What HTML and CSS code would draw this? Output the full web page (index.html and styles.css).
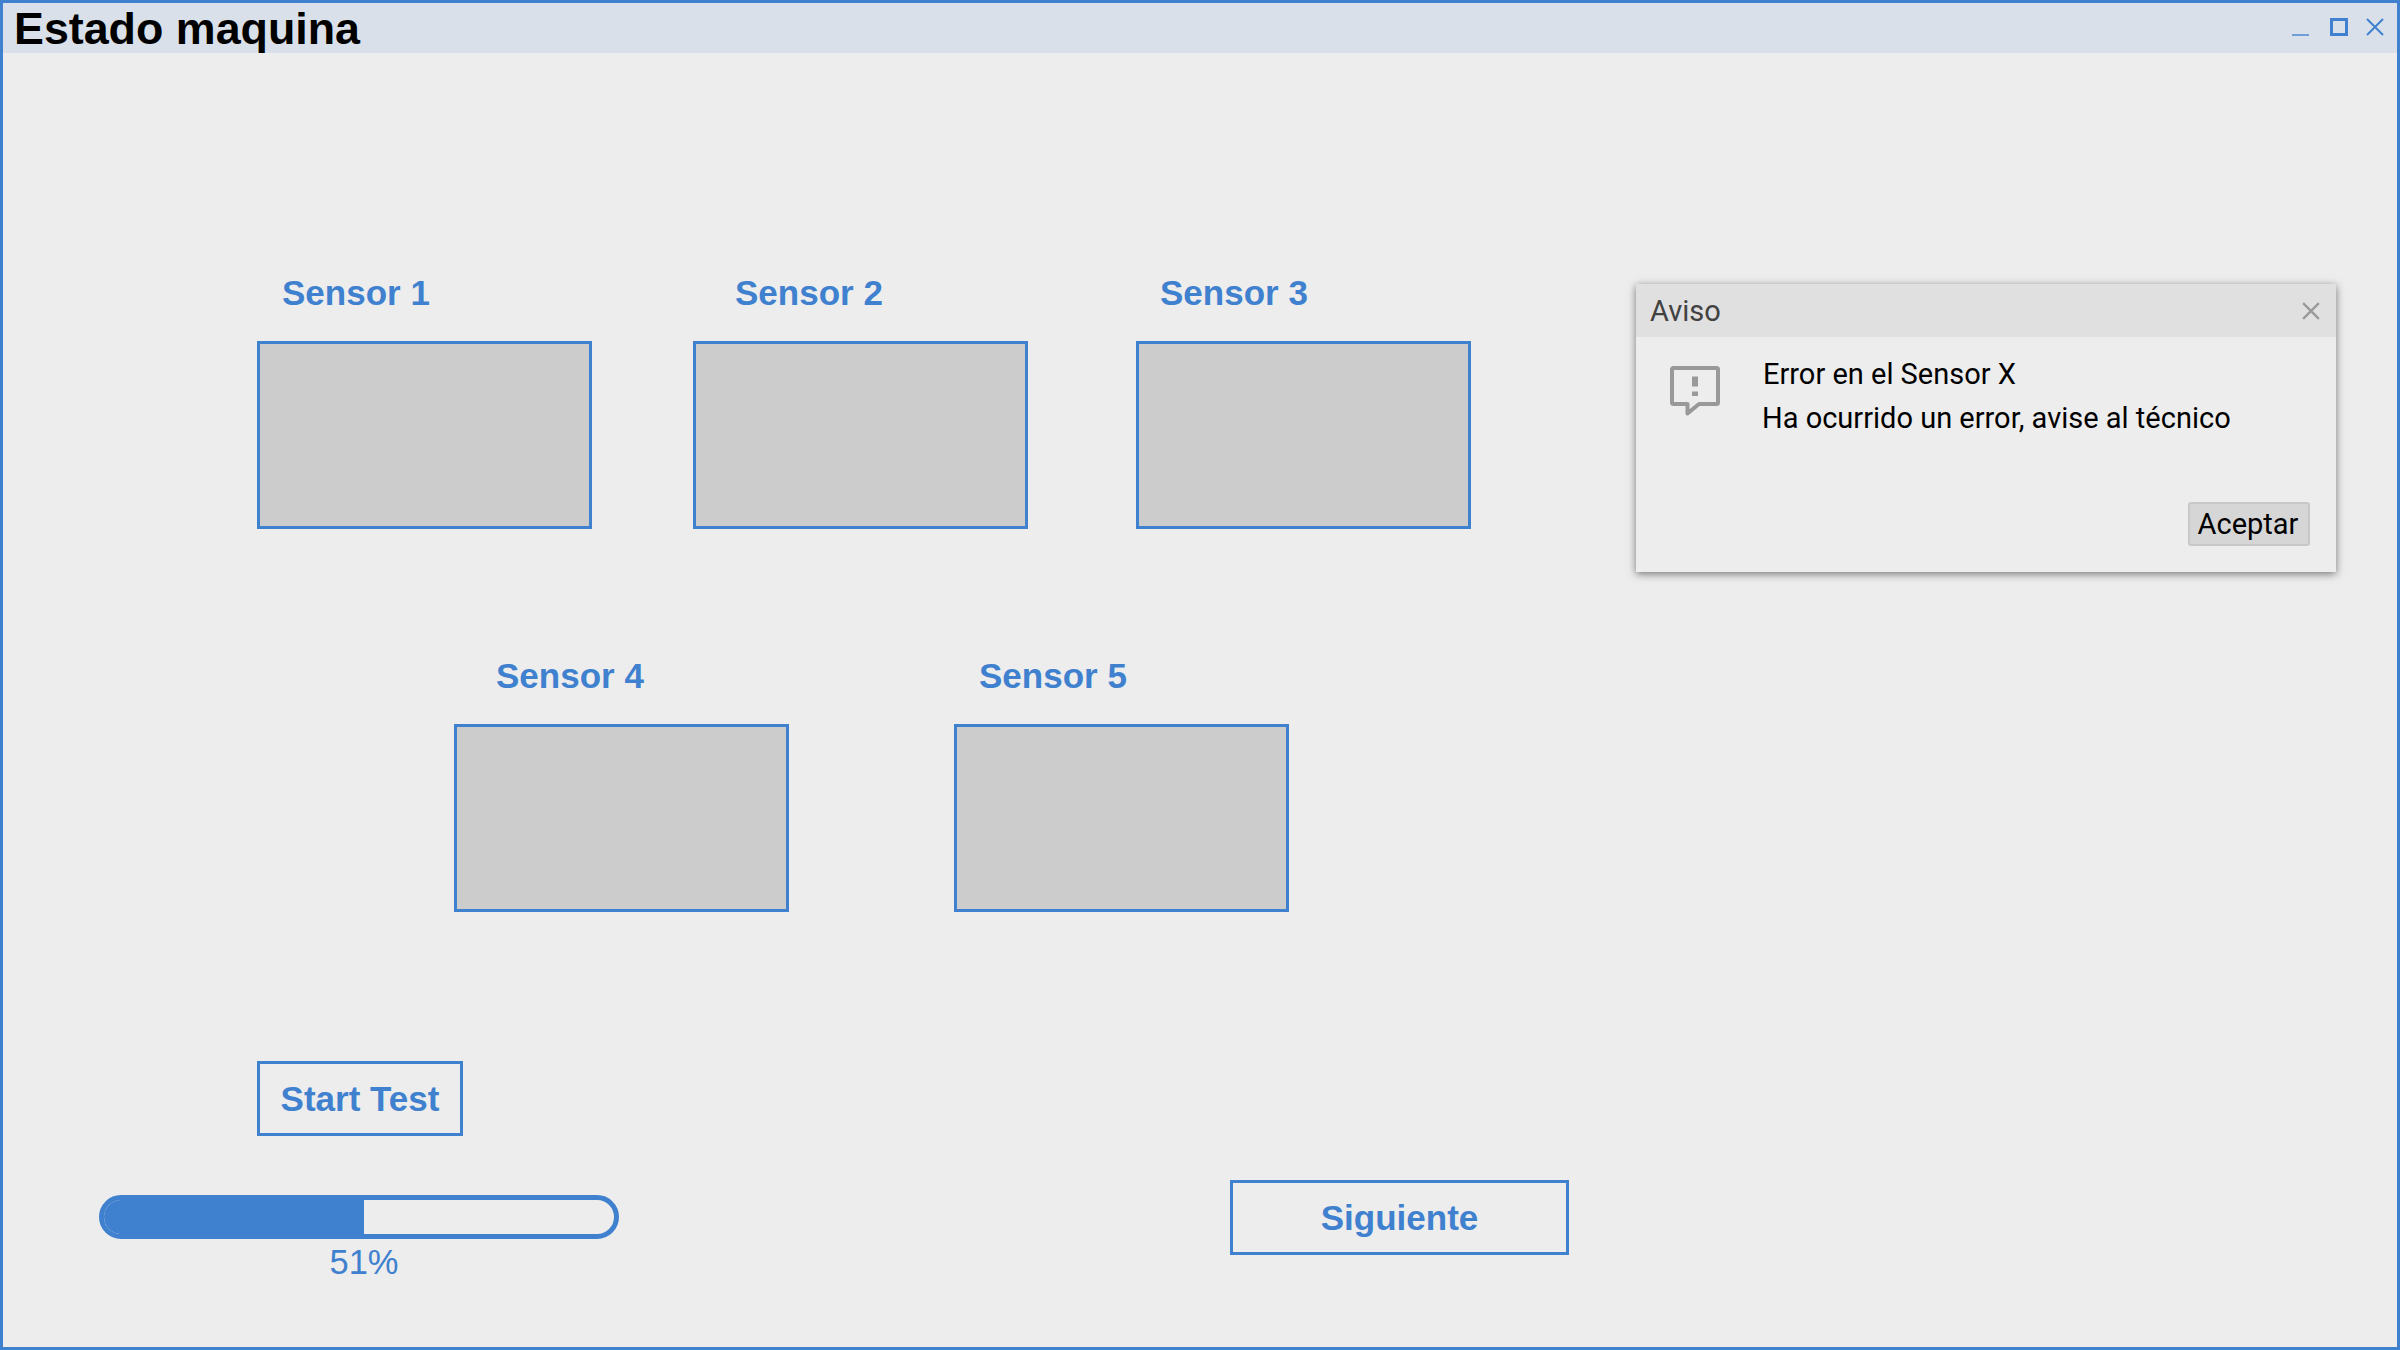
FILE: index.html
```html
<!DOCTYPE html>
<html lang="en">
<head>
    <meta charset="UTF-8">
    <meta name="viewport" content="width=device-width, initial-scale=1.0">
    <title>Estado maquina</title>
    <link rel="stylesheet" href="styles.css">
</head>
<body>
    <div class="window">
        <header class="titlebar">
            <h1>Estado maquina</h1>
            <div class="win-controls">
                <svg class="win-icon win-min" viewBox="0 0 18 18"><path d="M0 17H17" stroke="#3f81cf" stroke-opacity="0.7" stroke-width="2"/></svg>
                <svg class="win-icon" viewBox="0 0 18 18"><rect x="1.5" y="1.5" width="15" height="15" fill="none" stroke="#3f81cf" stroke-width="3"/></svg>
                <svg class="win-icon" viewBox="0 0 18 18"><path d="M1 1L17 17M17 1L1 17" stroke="#3f81cf" stroke-width="2"/></svg>
            </div>
        </header>

        <main class="content">
            <section class="sensors">
                <div class="sensor-row row-top">
                    <div class="sensor s1"><h2>Sensor 1</h2><div class="sensor-box"></div></div>
                    <div class="sensor s2"><h2>Sensor 2</h2><div class="sensor-box"></div></div>
                    <div class="sensor s3"><h2>Sensor 3</h2><div class="sensor-box"></div></div>
                </div>
                <div class="sensor-row row-bottom">
                    <div class="sensor s4"><h2>Sensor 4</h2><div class="sensor-box"></div></div>
                    <div class="sensor s5"><h2>Sensor 5</h2><div class="sensor-box"></div></div>
                </div>
            </section>

            <button class="outline-btn start-btn" type="button">Start Test</button>

            <div class="bottom-row">
                <div class="progress-wrap">
                    <div class="progress"><div class="progress-fill" style="width: 51%"></div></div>
                    <div class="progress-label">51%</div>
                </div>
                <button class="outline-btn next-btn" type="button">Siguiente</button>
            </div>
        </main>

        <div class="dialog">
            <div class="dialog-head">
                <span>Aviso</span>
                <svg class="dialog-close" viewBox="0 0 16 16"><path d="M1 1L15 15M15 1L1 15" stroke="#999" stroke-width="2"/></svg>
            </div>
            <div class="dialog-body">
                <svg class="dialog-icon" viewBox="0 0 50 50"><path d="M3.500 2H46.500A1.500 1.500 0 0 1 48 3.500V36.500A1.500 1.500 0 0 1 46.500 38H29L17.500 47.500V38H3.500A1.500 1.500 0 0 1 2 36.500V3.500A1.500 1.500 0 0 1 3.500 2Z" fill="none" stroke="#999" stroke-width="4" stroke-linejoin="round"/><rect x="22" y="10.500" width="6" height="10" fill="#999"/><rect x="22" y="25.500" width="6" height="4.500" fill="#999"/></svg>
                <div class="dialog-text">
                    <p class="line-one">Error en el Sensor X</p>
                    <p>Ha ocurrido un error, avise al técnico</p>
                </div>
            </div>
            <div class="dialog-foot">
                <button class="accept-btn" type="button">Aceptar</button>
            </div>
        </div>
    </div>
</body>
</html>
```

FILE: styles.css
```css
html, body {
    margin: 0;
    padding: 0;
}
body {
    width: 2400px;
    height: 1350px;
    overflow: hidden;
}
.window {
    position: relative;
    box-sizing: border-box;
    width: 2400px;
    height: 1350px;
    background-color: #ededed;
    border: 3px solid #3f81cf;
}

/* title bar */
.titlebar {
    display: flex;
    justify-content: space-between;
    height: 50px;
    background-color: #d9e0ea;
}
h1 {
    margin: 0 0 0 11px;
    font-family: "Liberation Sans", Arial, sans-serif;
    font-size: 44.8px;
    line-height: 51px;
    font-weight: 700;
    color: #000;
}
.win-controls {
    display: flex;
    gap: 18px;
    padding: 15px 13px 0 0;
}
.win-icon {
    width: 18px;
    height: 18px;
}
.win-min {
    margin-right: 2px;
}

/* main area */
.content {
    padding: 219px 0 0 254px;
    font-family: "Liberation Sans", Arial, sans-serif;
}
.sensor-row {
    display: flex;
}
.row-top {
    margin-bottom: 126px;
}
.row-bottom {
    margin-left: 197px;
}
.s2 { margin-left: 101px; }
.s3 { margin-left: 108px; }
.s5 { margin-left: 165px; }
.sensor h2 {
    margin: 0 0 28px;
    font-size: 35px;
    line-height: 41px;
    font-weight: 700;
    color: #3f81cf;
}
.s1 h2 { margin-left: 25px; }
.s2 h2 { margin-left: 42px; }
.s3 h2 { margin-left: 24px; }
.s4 h2 { margin-left: 42px; }
.s5 h2 { margin-left: 25px; }
.sensor-box {
    box-sizing: border-box;
    width: 335px;
    height: 188px;
    background-color: #cccccc;
    border: 3px solid #3f81cf;
}

/* buttons */
.outline-btn {
    display: block;
    box-sizing: border-box;
    padding: 0;
    height: 75px;
    background: none;
    border: 3px solid #3f81cf;
    font-family: "Liberation Sans", Arial, sans-serif;
    font-size: 35px;
    font-weight: 700;
    color: #3f81cf;
}
.start-btn {
    width: 206px;
    margin-top: 149px;
}
.bottom-row {
    display: flex;
    align-items: flex-start;
    margin: 44px 0 0 -158px;
}
.progress-wrap {
    width: 520px;
    margin-top: 15px;
}
.progress {
    box-sizing: border-box;
    height: 44px;
    border: 5px solid #3f81cf;
    border-radius: 22px;
    overflow: hidden;
}
.progress-fill {
    height: 100%;
    background-color: #3f81cf;
}
.progress-label {
    margin-top: 3px;
    padding-left: 10px;
    text-align: center;
    font-size: 34.5px;
    line-height: 40px;
    color: #3f81cf;
}
.next-btn {
    width: 339px;
    margin-left: 611px;
}

/* dialog */
.dialog {
    position: absolute;
    left: 1633px;
    top: 281px;
    width: 700px;
    height: 288px;
    background-color: #ededed;
    box-shadow: 0 2px 8px rgba(0, 0, 0, 0.5);
    font-family: Roboto, sans-serif;
}
.dialog-head {
    display: flex;
    justify-content: space-between;
    align-items: center;
    height: 53px;
    padding: 0 16px 0 14px;
    background-color: #e0e0e0;
    font-size: 29px;
    color: #424242;
}
.dialog-close {
    width: 18px;
    height: 18px;
}
.dialog-body {
    display: flex;
    height: 165px;
    padding: 15px 0 0 34px;
    box-sizing: border-box;
}
.dialog-icon {
    width: 50px;
    height: 50px;
    margin-top: 14px;
}
.dialog-text {
    margin-left: 42px;
    font-size: 29px;
    line-height: 44px;
    color: #000;
}
.dialog-text p {
    margin: 0;
}
.line-one {
    padding-left: 1px;
}
.dialog-foot {
    display: flex;
    justify-content: flex-end;
    padding-right: 26px;
}
.accept-btn {
    box-sizing: border-box;
    width: 122px;
    height: 44px;
    padding: 0 2px 0 0;
    background-color: #d6d6d6;
    border: 2px solid #c8c8c8;
    border-radius: 3px;
    font-family: Roboto, sans-serif;
    font-size: 29px;
    color: #000;
}
```
